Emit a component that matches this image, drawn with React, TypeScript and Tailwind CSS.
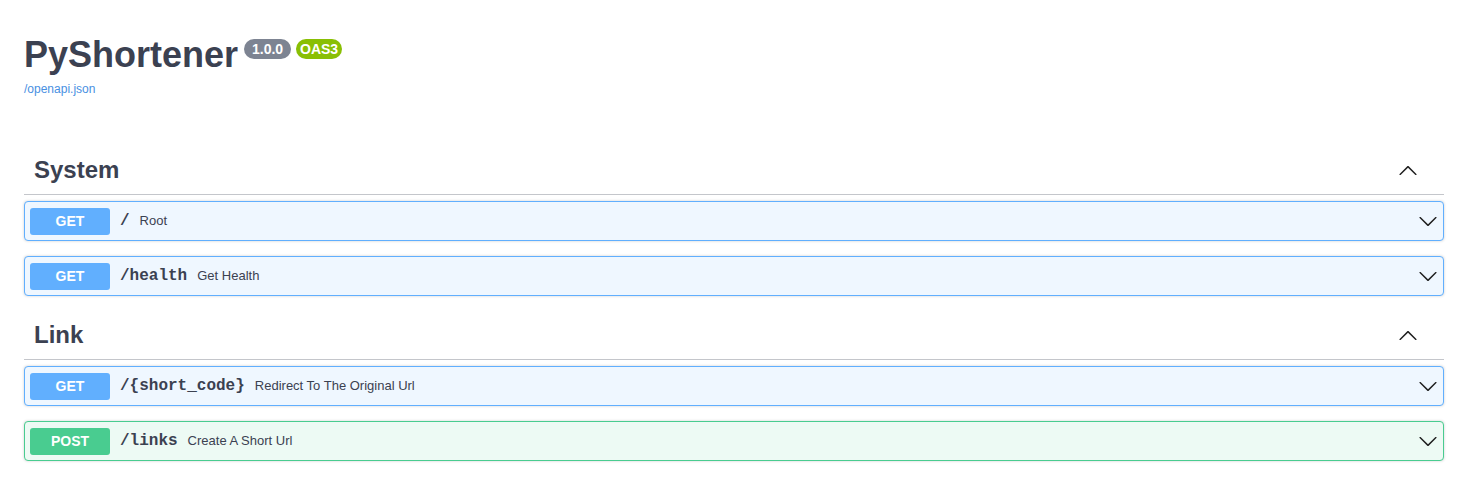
const groups = [
  {
    name: "System",
    ops: [
      { method: "GET", path: "/", summary: "Root" },
      { method: "GET", path: "/health", summary: "Get Health" },
    ],
  },
  {
    name: "Link",
    ops: [
      { method: "GET", path: "/{short_code}", summary: "Redirect To The Original Url" },
      { method: "POST", path: "/links", summary: "Create A Short Url" },
    ],
  },
];

function ArrowDown() {
  return (
    <svg className="h-[20px] w-[20px] fill-[#1f1f1f]" viewBox="0 0 20 20">
      <path d="M17.418 6.109c.272-.268.709-.268.979 0s.271.701 0 .969l-7.908 7.83c-.27.268-.707.268-.979 0l-7.908-7.83c-.27-.268-.27-.701 0-.969.271-.268.709-.268.979 0L10 13.25l7.418-7.141z" />
    </svg>
  );
}

function ArrowUp() {
  return (
    <svg className="h-[20px] w-[20px] fill-[#1f1f1f]" viewBox="0 0 20 20">
      <path d="M17.418 14.908c.272.268.709.268.979 0s.271-.701 0-.969l-7.908-7.83c-.27-.268-.707-.268-.979 0l-7.908 7.83c-.27.268-.27.701 0 .969.271.268.709.268.979 0L10 7.767l7.418 7.141z" />
    </svg>
  );
}

function Operation({ method, path, summary }: { method: string; path: string; summary: string }) {
  const post = method === "POST";
  return (
    <div
      className={
        post
          ? "mb-[15px] flex h-[40px] items-center rounded-[4px] border border-[#49cc90] bg-[#edfaf4] pl-[5px] pr-[5px] shadow-[0_0_3px_rgba(0,0,0,0.19)]"
          : "mb-[15px] flex h-[40px] items-center rounded-[4px] border border-[#61affe] bg-[#eff7ff] pl-[5px] pr-[5px] shadow-[0_0_3px_rgba(0,0,0,0.19)]"
      }
    >
      <span
        className={
          post
            ? "flex h-[27px] w-[80px] items-center justify-center rounded-[3px] bg-[#49cc90] text-[14px] font-bold text-white"
            : "flex h-[27px] w-[80px] items-center justify-center rounded-[3px] bg-[#61affe] text-[14px] font-bold text-white"
        }
      >
        {method}
      </span>
      <span className="px-[10px] font-['Liberation_Mono',monospace] text-[16px] font-bold text-[#3b4151]">
        {path}
      </span>
      <span className="text-[13px] text-[#3b4151]">{summary}</span>
      <span className="ml-auto flex items-center">
        <ArrowDown />
      </span>
    </div>
  );
}

export default function App() {
  return (
    <div className="min-h-screen bg-white font-['Liberation_Sans',Arial,sans-serif] text-[#3b4151]">
      <div className="ml-[24px] w-[1420px] pt-[34px]">
        <div className="mb-[50px]">
          <div className="flex items-start">
            <h1 className="text-[36px] font-bold leading-[41px] text-[#3b4151]">PyShortener</h1>
            <span className="ml-[6px] mt-[5px] flex h-[20px] w-[47px] items-center justify-center rounded-full bg-[#7d8492] text-[14px] font-bold text-white">
              1.0.0
            </span>
            <span className="ml-[5px] mt-[5px] flex h-[20px] w-[46px] items-center justify-center rounded-full bg-[#89bf04] text-[14px] font-bold text-white">
              OAS3
            </span>
          </div>
          <a className="mt-[7px] block text-[12px] leading-[14px] text-[#4990e2]" href="#">
            /openapi.json
          </a>
        </div>

        {groups.map((group) => (
          <section key={group.name}>
            <div className="mb-[6px] flex h-[49px] items-center border-b border-[#c4c6cb] pl-[10px] pr-[26px]">
              <h3 className="text-[24px] font-bold leading-[28px] text-[#3b4151]">{group.name}</h3>
              <span className="ml-auto flex items-center">
                <ArrowUp />
              </span>
            </div>
            {group.ops.map((op) => (
              <Operation key={op.method + op.path} {...op} />
            ))}
          </section>
        ))}
      </div>
    </div>
  );
}
